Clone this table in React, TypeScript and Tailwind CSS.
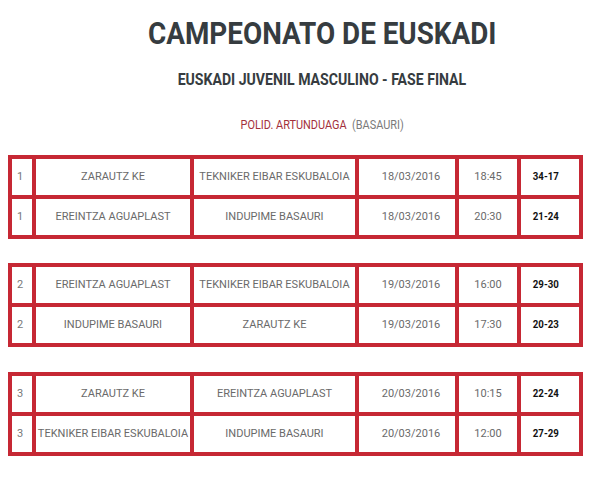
import React from 'react';

type Match = [string, string, string, string, string, string];

const ROUNDS: Match[][] = [
  [
    ['1', 'ZARAUTZ KE', 'TEKNIKER EIBAR ESKUBALOIA', '18/03/2016', '18:45', '34-17'],
    ['1', 'EREINTZA AGUAPLAST', 'INDUPIME BASAURI', '18/03/2016', '20:30', '21-24'],
  ],
  [
    ['2', 'EREINTZA AGUAPLAST', 'TEKNIKER EIBAR ESKUBALOIA', '19/03/2016', '16:00', '29-30'],
    ['2', 'INDUPIME BASAURI', 'ZARAUTZ KE', '19/03/2016', '17:30', '20-23'],
  ],
  [
    ['3', 'ZARAUTZ KE', 'EREINTZA AGUAPLAST', '20/03/2016', '10:15', '22-24'],
    ['3', 'TEKNIKER EIBAR ESKUBALOIA', 'INDUPIME BASAURI', '20/03/2016', '12:00', '27-29'],
  ],
];

const cell = 'border-2 border-[#c62834] flex items-center h-[40px] text-[11px] text-[#6a6a6a] whitespace-nowrap overflow-hidden';

const RoundTable: React.FC<{ rows: Match[] }> = ({ rows }) => (
  <div className="ml-2 w-[575px] border-2 border-[#c62834] grid grid-cols-[24px_158px_165px_100px_62px_62px]">
    {rows.map((r, i) => (
      <React.Fragment key={i}>
        <div className={`${cell} pl-[5px] text-[#777]`}>{r[0]}</div>
        <div className={`${cell} justify-center`}>{r[1]}</div>
        <div className={`${cell} justify-center`}>{r[2]}</div>
        <div className={`${cell} justify-center pl-2`}>{r[3]}</div>
        <div className={`${cell} justify-center`}>{r[4]}</div>
        <div className={`${cell} justify-center pr-2`}>
          <span className="inline-block font-bold text-[#111] scale-x-[0.88]">{r[5]}</span>
        </div>
      </React.Fragment>
    ))}
  </div>
);

export default function App() {
  return (
    <div className="w-[616px] h-[477px] bg-white overflow-hidden font-['Roboto','Liberation_Sans',sans-serif]">
      <div className="pl-7 flex flex-col items-center">
        <h1 className="mt-[17px] text-[32px] leading-none font-bold text-[#363c40] scale-x-[0.87] whitespace-nowrap">
          CAMPEONATO DE EUSKADI
        </h1>
        <h2 className="mt-[23px] text-[16px] leading-none font-bold text-[#363c40] scale-x-[0.88] whitespace-nowrap">
          EUSKADI JUVENIL MASCULINO - FASE FINAL
        </h2>
        <p className="mt-[30px] text-[13px] leading-none scale-x-[0.84] whitespace-nowrap">
          <span className="text-[#a3303b]">POLID. ARTUNDUAGA</span>
          <span className="text-[#7a7a7a]">{'\u00a0 '}(BASAURI)</span>
        </p>
      </div>
      <div className="mt-6">
        <RoundTable rows={ROUNDS[0]} />
      </div>
      <div className="mt-6">
        <RoundTable rows={ROUNDS[1]} />
      </div>
      <div className="mt-[25px]">
        <RoundTable rows={ROUNDS[2]} />
      </div>
    </div>
  );
}
